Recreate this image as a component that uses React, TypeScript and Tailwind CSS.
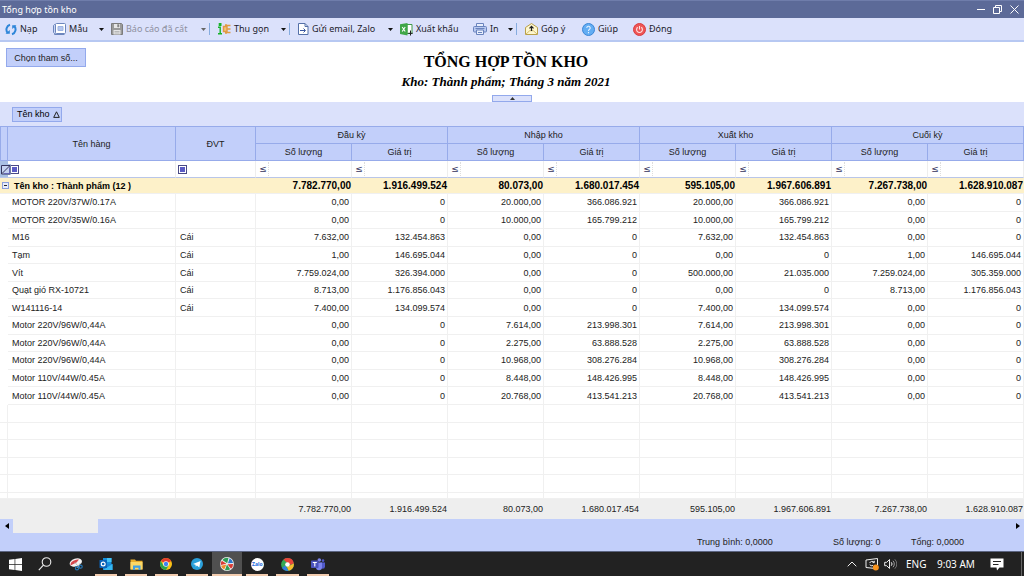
import type { ReactNode } from "react";
import clsx from "clsx";

const groups = ["Đầu kỳ", "Nhập kho", "Xuất kho", "Cuối kỳ"];

const totals = [
  "7.782.770,00", "1.916.499.524", "80.073,00", "1.680.017.454",
  "595.105,00", "1.967.606.891", "7.267.738,00", "1.628.910.087",
];

const items = [
  { name: "MOTOR 220V/37W/0.17A", unit: "", values: ["0,00", "0", "20.000,00", "366.086.921", "20.000,00", "366.086.921", "0,00", "0"] },
  { name: "MOTOR 220V/35W/0.16A", unit: "", values: ["0,00", "0", "10.000,00", "165.799.212", "10.000,00", "165.799.212", "0,00", "0"] },
  { name: "M16", unit: "Cái", values: ["7.632,00", "132.454.863", "0,00", "0", "7.632,00", "132.454.863", "0,00", "0"] },
  { name: "Tạm", unit: "Cái", values: ["1,00", "146.695.044", "0,00", "0", "0,00", "0", "1,00", "146.695.044"] },
  { name: "Vít", unit: "Cái", values: ["7.759.024,00", "326.394.000", "0,00", "0", "500.000,00", "21.035.000", "7.259.024,00", "305.359.000"] },
  { name: "Quạt gió RX-10721", unit: "Cái", values: ["8.713,00", "1.176.856.043", "0,00", "0", "0,00", "0", "8.713,00", "1.176.856.043"] },
  { name: "W141116-14", unit: "Cái", values: ["7.400,00", "134.099.574", "0,00", "0", "7.400,00", "134.099.574", "0,00", "0"] },
  { name: "Motor 220V/96W/0,44A", unit: "", values: ["0,00", "0", "7.614,00", "213.998.301", "7.614,00", "213.998.301", "0,00", "0"] },
  { name: "Motor 220V/96W/0,44A", unit: "", values: ["0,00", "0", "2.275,00", "63.888.528", "2.275,00", "63.888.528", "0,00", "0"] },
  { name: "Motor 220V/96W/0,44A", unit: "", values: ["0,00", "0", "10.968,00", "308.276.284", "10.968,00", "308.276.284", "0,00", "0"] },
  { name: "Motor 110V/44W/0.45A", unit: "", values: ["0,00", "0", "8.448,00", "148.426.995", "8.448,00", "148.426.995", "0,00", "0"] },
  { name: "Motor 110V/44W/0.45A", unit: "", values: ["0,00", "0", "20.768,00", "413.541.213", "20.768,00", "413.541.213", "0,00", "0"] },
];

const emptyRows = [1, 2, 3, 4, 5];

const headCell = "border-r border-b border-[#97abea] bg-[#c2cffa] p-0 text-center font-normal";
const lineCell = "border-r border-b border-[#f0f0f0] p-0";

export default function App() {
  return (
    <div className="flex h-screen min-h-[560px] flex-col overflow-hidden bg-white font-['Liberation_Sans',sans-serif] text-[9px] leading-4 text-[#222]">
      <TitleBar />
      <Toolbar />

      <section className="relative flex h-[60px] shrink-0 items-start px-1.5 pt-1.5">
        <button className="h-[19px] w-20 shrink-0 border border-[#93a9ec] bg-[#c2cffa]">Chọn tham số...</button>
        <div className="flex-1 pr-[92px] text-center font-['Liberation_Serif',serif] font-bold text-black">
          <h1 className="pt-1 text-[16px] leading-5">TỔNG HỢP TỒN KHO</h1>
          <p className="text-[13px] leading-5 italic">Kho: Thành phẩm; Tháng 3 năm 2021</p>
        </div>
        <button
          aria-label="Thu gọn tiêu đề"
          className="absolute bottom-0 left-1/2 flex h-[7px] w-10 -translate-x-1/2 items-center justify-center border border-[#93a9ec] bg-[#dbe1fb]"
        >
          <svg width="5" height="3" viewBox="0 0 5 3"><path d="M0 3 2.5 0 5 3z" fill="#333" /></svg>
        </button>
      </section>

      <div className="flex h-6 shrink-0 items-center bg-[#dbe1fb] px-3">
        <button className="flex h-[15px] items-center gap-[3px] border border-[#93a9ec] bg-[#c2cffa] pr-px pl-1 text-black">
          Tên kho
          <svg width="7" height="7" viewBox="0 0 7 7"><path d="M.7 6.4 3.5.8 6.3 6.4z" fill="none" stroke="#222" /></svg>
        </button>
      </div>

      <main className="min-h-0 flex-1">
        <StockTable />
      </main>

      <ScrollBar />

      <div className="flex h-[18px] shrink-0 items-center justify-end bg-[#c2cffa] pr-[60px]">
        <span className="w-[136px]">Trung bình: 0,0000</span>
        <span className="w-[78px]">Số lượng: 0</span>
        <span>Tổng: 0,0000</span>
      </div>

      <TaskBar />
    </div>
  );
}

function TitleBar() {
  return (
    <header className="flex h-[18px] shrink-0 items-center justify-between border-t border-[#6f7dab] bg-[#5c6a98] pl-0.5 font-['Noto_Sans',sans-serif] text-white">
      <span>Tổng hợp tồn kho</span>
      <div className="flex">
        <button aria-label="Thu nhỏ" className="flex w-4 justify-center">
          <svg width="9" height="9" viewBox="0 0 9 9"><path d="M0 4.5h8" stroke="#fff" /></svg>
        </button>
        <button aria-label="Khôi phục" className="flex w-4 justify-center">
          <svg width="9" height="9" viewBox="0 0 9 9" fill="none" stroke="#fff"><path d="M.5 2.5h6v6h-6zM2.5 2.5v-2h6v6h-2" /></svg>
        </button>
        <button aria-label="Đóng cửa sổ" className="flex w-[19px] justify-center">
          <svg width="9" height="9" viewBox="0 0 9 9"><path d="m.5.5 8 8m0-8-8 8" stroke="#fff" /></svg>
        </button>
      </div>
    </header>
  );
}

function Toolbar() {
  return (
    <nav className="flex h-6 shrink-0 items-center border-b-2 border-[#b7c8f2] bg-[#dbe1fb] pl-[5px] font-['Noto_Sans',sans-serif] text-[#1c1c2c]">
      <Tool label="Nạp" width="w-12"><ReloadIcon /></Tool>
      <Tool label="Mẫu" width="w-[45px]"><TemplateIcon /></Tool>
      <Arrow label="Chọn mẫu" />
      <Tool label="Báo cáo đã cất" width="w-[89px]" disabled><SaveIcon /></Tool>
      <Arrow label="Chọn báo cáo đã cất" disabled />
      <Divider />
      <Tool label="Thu gọn" width="w-[62px]"><CollapseIcon /></Tool>
      <Arrow label="Chọn thu gọn" />
      <Divider />
      <Tool label="Gửi email, Zalo" width="w-[89px]"><SendIcon /></Tool>
      <Arrow label="Chọn cách gửi" />
      <Tool label="Xuất khẩu" width="w-[73px]"><ExcelIcon /></Tool>
      <Tool label="In" width="w-[34px]"><PrintIcon /></Tool>
      <Arrow label="Chọn cách in" />
      <Divider />
      <Tool label="Góp ý" width="w-[57px]"><FeedbackIcon /></Tool>
      <Tool label="Giúp" width="w-[51px]"><HelpIcon /></Tool>
      <Tool label="Đóng" width="w-12"><PowerIcon /></Tool>
    </nav>
  );
}

function Tool({ label, width, disabled, children }: { label: string; width: string; disabled?: boolean; children: ReactNode }) {
  return (
    <button disabled={disabled} className={clsx("flex shrink-0 items-center gap-[3px] whitespace-nowrap", width, disabled && "text-[#8d8f9e]")}>
      {children}
      {label}
    </button>
  );
}

function Arrow({ label, disabled }: { label: string; disabled?: boolean }) {
  return (
    <button aria-label={label} disabled={disabled} className="flex w-[13px] shrink-0 pl-px">
      <svg width="5" height="3" viewBox="0 0 5 3"><path d="M0 0h5L2.5 3z" fill={disabled ? "#666" : "#111"} /></svg>
    </button>
  );
}

function Divider() {
  return <span className="-ml-1 mr-2 h-3 w-px shrink-0 bg-[#86acdf]" />;
}

function StockTable() {
  return (
    <table className="h-full w-full table-fixed border-separate border-spacing-0">
      <colgroup>
        <col className="w-2" />
        <col className="w-[168px]" />
        <col className="w-20" />
        {totals.map((_, i) => <col key={i} />)}
      </colgroup>
      <thead>
        <tr className="h-[18px]">
          <th rowSpan={2} className={clsx(headCell, "border-t border-l")} />
          <th rowSpan={2} className={clsx(headCell, "border-t")}>Tên hàng</th>
          <th rowSpan={2} className={clsx(headCell, "border-t")}>ĐVT</th>
          {groups.map((g) => (
            <th key={g} colSpan={2} className={clsx(headCell, "border-t")}>{g}</th>
          ))}
        </tr>
        <tr className="h-[17px]">
          {groups.map((g) => [
            <th key={g + "q"} className={headCell}>Số lượng</th>,
            <th key={g + "v"} className={headCell}>Giá trị</th>,
          ])}
        </tr>
        <tr className="h-[17px]">
          <td className="relative border-b border-[#b9c6e8] bg-[#a9c0e4] p-0">
            <svg className="absolute top-[3px] left-0" width="11" height="11" viewBox="0 0 11 11">
              <path d="M0 0h11v11H0z" fill="#a9c0e4" />
              <path d="M1.500 1.500h8.500v8.500H1.500zM2 9.500 10 1.500" fill="#c5d3f1" stroke="#36365e" />
              <path d="M4 9.500h5.500V4" fill="none" stroke="#6667b5" />
            </svg>
          </td>
          <FilterText label="Lọc tên hàng" />
          <FilterText label="Lọc ĐVT" />
          {totals.map((_, i) => (
            <td key={i} className="border-r border-b border-r-[#eee] border-b-[#b9c6e8] p-0">
              <div className="flex items-center">
                <button aria-label="Điều kiện lọc" className="w-3 shrink-0 pl-0.5 text-center font-['DejaVu_Sans',sans-serif] text-[#33335c]">≤</button>
                <input aria-label="Giá trị lọc" className="h-3.5 w-full min-w-0 border-l border-dotted border-[#ddd] outline-none" />
              </div>
            </td>
          ))}
        </tr>
      </thead>
      <tbody>
        <tr className="h-4 bg-[#fdf1c9] text-[10px] font-bold text-black">
          <td colSpan={3} className="border-b border-[#f0f0f0] p-0">
            <div className="flex items-center gap-[5px] pl-0.5 text-[9px] leading-[14px]">
              <button aria-label="Thu gọn nhóm" className="flex size-[7px] items-center justify-center border border-[#8ba0dd] bg-[#e8edfc]">
                <span className="h-px w-[3px] bg-[#222]" />
              </button>
              Tên kho : Thành phẩm (12 )
            </div>
          </td>
          {totals.map((t, i) => (
            <td key={i} className="border-b border-[#f0f0f0] p-0 pr-px text-right leading-[14px]">{t}</td>
          ))}
        </tr>
        {items.map((item, i) => (
          <tr key={i}>
            <td className="p-0" />
            <td className={clsx(lineCell, "pl-1")}>{item.name}</td>
            <td className={clsx(lineCell, "pl-1")}>{item.unit}</td>
            {item.values.map((v, n) => (
              <td key={n} className={clsx(lineCell, "pr-0.5 text-right")}>{v}</td>
            ))}
          </tr>
        ))}
        {emptyRows.map((n) => (
          <tr key={n}>
            <td className={lineCell}>&nbsp;</td>
            <td className={lineCell} />
            <td className={lineCell} />
            {totals.map((_, i) => <td key={i} className={lineCell} />)}
          </tr>
        ))}
        <tr className="h-1.5">
          <td className={lineCell} />
          <td className={lineCell} />
          <td className={lineCell} />
          {totals.map((_, i) => <td key={i} className={lineCell} />)}
        </tr>
      </tbody>
      <tfoot>
        <tr className="h-5 bg-[#eee]">
          <td colSpan={3} className="p-0" />
          {totals.map((t, i) => (
            <td key={i} className="p-0 pr-px text-right">{t}</td>
          ))}
        </tr>
      </tfoot>
    </table>
  );
}

function FilterText({ label }: { label: string }) {
  return (
    <td className="border-r border-b border-r-[#eee] border-b-[#b9c6e8] p-0">
      <div className="flex items-center gap-0.5 pl-0.5">
        <button aria-label="Điều kiện lọc" className="flex size-[9px] shrink-0 items-center justify-center border border-[#4a4a86] bg-white">
          <span className="size-[5px] bg-[#5b5bc4]" />
        </button>
        <input aria-label={label} className="h-3.5 w-full min-w-0 outline-none" />
      </div>
    </td>
  );
}

function ScrollBar() {
  return (
    <div className="flex h-3.5 shrink-0 items-center justify-between bg-[#c2cffa]">
      <div className="flex h-full items-center">
        <button aria-label="Cuộn trái" className="flex w-[13px] justify-center">
          <svg width="4" height="6" viewBox="0 0 4 6"><path d="M4 0v6L0 3z" fill="#000" /></svg>
        </button>
        <div className="h-full w-[85px] bg-[#eee]" />
      </div>
      <button aria-label="Cuộn phải" className="flex w-[13px] justify-center">
        <svg width="4" height="6" viewBox="0 0 4 6"><path d="M0 0v6l4-3z" fill="#000" /></svg>
      </button>
    </div>
  );
}

function TaskBar() {
  return (
    <footer className="flex h-[25px] shrink-0 items-stretch justify-between border-t border-[#5b6480] bg-[#222] font-['Noto_Sans',sans-serif] text-white">
      <div className="grid w-[333px] grid-cols-11">
        <TaskButton label="Bắt đầu">
          <svg width="13" height="13" viewBox="0 0 13 13" fill="#fff"><path d="M0 1.800 5.600 1v5.100H0zM6.300.9 13 0v6.100H6.300zM0 6.800h5.600V12L0 11.200zM6.300 6.800H13V13l-6.700-.9z" /></svg>
        </TaskButton>
        <TaskButton label="Tìm kiếm">
          <svg width="14" height="14" viewBox="0 0 14 14" fill="none" stroke="#eee" strokeWidth="1.100"><circle cx="8.500" cy="5" r="4.300" /><path d="M5.400 8.200.8 13.200" /></svg>
        </TaskButton>
        <TaskButton label="Công cụ cắt">
          <svg width="14" height="14" viewBox="0 0 14 14">
            <ellipse cx="6.800" cy="5.500" rx="6.300" ry="4" transform="rotate(-18 6.800 5.500)" fill="#f3f3f3" />
            <path d="M1.500 8.500C1 5 5 2.500 10 2.500L7.500 5.500z" fill="#d6454b" />
            <path d="m6 5.500 5 6M11.500 6 8 11" stroke="#bbb" />
            <circle cx="8" cy="11.300" r="1.600" fill="none" stroke="#2476b5" strokeWidth="1.200" />
            <circle cx="11.700" cy="9.700" r="1.500" fill="none" stroke="#2476b5" strokeWidth="1.200" />
          </svg>
        </TaskButton>
        <TaskButton label="Outlook" open>
          <svg width="14" height="14" viewBox="0 0 14 14">
            <path d="M4 1h8.500v8H4z" fill="#1590dd" />
            <path d="M8 1h4.500v4H8z" fill="#45c3f5" />
            <path d="M4 7h9.500v6H4z" fill="#1a84d4" />
            <path d="m4 13 9.500-6v6z" fill="#35b8f1" />
            <rect x=".5" y="3" width="7.500" height="8" rx=".6" fill="#0a63b8" />
            <circle cx="4.200" cy="7" r="1.900" fill="none" stroke="#fff" strokeWidth="1.200" />
          </svg>
        </TaskButton>
        <TaskButton label="Thư mục" open>
          <svg width="13" height="13" viewBox="0 0 13 13">
            <path d="M.5 1.500h4.500l1 1.300h6.500v8.700H.5z" fill="#e9ae2c" />
            <path d="M.5 4h12v7.500H.5z" fill="#fcd866" />
            <path d="M3 7.500h7.500V12H8.500V9.700H5V12H3z" fill="#3fa0e4" />
          </svg>
        </TaskButton>
        <TaskButton label="Chrome" open><ChromeIcon /></TaskButton>
        <TaskButton label="Telegram" open>
          <svg width="12" height="12" viewBox="0 0 12 12"><circle cx="6" cy="6" r="6" fill="#2a9fd9" /><path d="m2 5.900 7.500-3-1.200 6.500-2.400-1.800-1.100 1.100-.3-2z" fill="#fff" /></svg>
        </TaskButton>
        <TaskButton label="Kế toán" open active>
          <svg width="14" height="14" viewBox="0 0 14 14">
            <circle cx="7" cy="7" r="6.900" fill="#f3f3f3" />
            <path d="M7.200 6.200 2.300 3A6.200 6.200 0 0 1 8.500.9z" fill="#2f9e57" />
            <path d="M8 6.300 9.600 1.300A6.200 6.200 0 0 1 13.100 6z" fill="#2b79cc" />
            <path d="M7.500 7.200 13.100 7A6.200 6.200 0 0 1 11 11.700z" fill="#d93a34" />
            <path d="M7 7.600 10.200 12.300A6.200 6.200 0 0 1 5 12.900z" fill="#2f9e57" />
            <path d="M6.400 7.500 4.200 12.500A6.200 6.200 0 0 1 1 8.800z" fill="#ef8c2c" />
            <path d="M6.400 6.700 .9 7.900A6.200 6.200 0 0 1 1.800 3.700z" fill="#d93a34" />
          </svg>
        </TaskButton>
        <TaskButton label="Zalo" open>
          <span className="flex h-[13px] w-[13px] items-center justify-center rounded-full bg-white text-[5px] font-bold text-[#1668dc]">Zalo</span>
        </TaskButton>
        <TaskButton label="Trình duyệt" open>
          <svg width="13" height="13" viewBox="0 0 13 13">
            <circle cx="6.500" cy="6.500" r="6.400" fill="#35a853" />
            <path d="M6.500.1a6.400 6.400 0 0 1 6.300 5.400L9 7 4 3 2.500 1.500A6.400 6.400 0 0 1 6.500.1z" fill="#e8453c" />
            <path d="M12.800 5.500a6.400 6.400 0 0 1-5.300 7.300L6 9l4-2z" fill="#f9bb2d" />
            <path d="M7.500 12.800A6.400 6.400 0 0 1 1 9.900L4 7.500z" fill="#2f7de1" />
            <circle cx="6.500" cy="6.500" r="2.300" fill="#fff" />
          </svg>
        </TaskButton>
        <TaskButton label="Teams" open>
          <svg width="14" height="13" viewBox="0 0 14 13">
            <circle cx="8.300" cy="2" r="1.800" fill="#7b83eb" />
            <circle cx="12" cy="2.600" r="1.300" fill="#5059c9" />
            <path d="M9.500 4.500H14v4a2.200 2.200 0 0 1-4.500 0z" fill="#5059c9" />
            <path d="M5 4.500h6v4.800a3 3 0 0 1-6 0z" fill="#7b83eb" />
            <rect y="2.500" width="7.500" height="7.500" rx=".7" fill="#4b53bc" />
            <path d="M1.800 4.500h4M3.800 4.500v4" stroke="#fff" strokeWidth="1.100" />
          </svg>
        </TaskButton>
      </div>

      <div className="flex items-center text-[10px]">
        <button aria-label="Biểu tượng ẩn" className="flex w-[18px]">
          <svg width="10" height="6" viewBox="0 0 10 6"><path d="m.7 5.300 4.300-4.300 4.300 4.300" fill="none" stroke="#eee" /></svg>
        </button>
        <button aria-label="Cập nhật" className="flex w-[19px]">
          <svg width="14" height="14" viewBox="0 0 14 14" fill="none" stroke="#eee">
            <path d="M10.500 11.500 1 10.500V3l11.500-1.500V8" />
            <path d="M9 5.300A2.500 2.500 0 0 0 4.700 6M4.700 7.500A2.500 2.500 0 0 0 8 8.500M9.300 3.800v1.800H7.500" />
            <circle cx="10.800" cy="10.500" r="3" fill="#f7931e" stroke="none" />
          </svg>
        </button>
        <button aria-label="Âm lượng" className="flex w-[22px]">
          <svg width="13" height="12" viewBox="0 0 13 12" fill="none" stroke="#eee">
            <path d="M.7 4.300h2L5.500 1.500v9L2.700 7.700h-2z" />
            <path d="M7.300 4.300a2.500 2.500 0 0 1 0 3.400" /><path d="M9 2.800a4.600 4.600 0 0 1 0 6.400" opacity=".6" /><path d="M10.800 1.300a6.600 6.600 0 0 1 0 9.400" opacity=".4" />
          </svg>
        </button>
        <span className="w-[31px]">ENG</span>
        <span className="w-[53px]">9:03 AM</span>
        <button aria-label="Thông báo" className="flex w-[31px]">
          <svg width="14" height="13" viewBox="0 0 14 13"><path d="M.5.5h13v9H9.500L7 12.500 6.500 9.500h-6z" fill="#fff" /><path d="M3 3.500h8M3 6.500h5.500" stroke="#222" /></svg>
        </button>
        <span className="mr-0.5 h-full w-px bg-[#666]" />
      </div>
    </footer>
  );
}

function TaskButton({ label, open, active, children }: { label: string; open?: boolean; active?: boolean; children: ReactNode }) {
  return (
    <button aria-label={label} className={clsx("relative flex items-center justify-center", active && "bg-[#505050]")}>
      {children}
      {open && <span className={clsx("absolute bottom-0 h-0.5 bg-[#f3cdb0]", active ? "inset-x-0" : "inset-x-1")} />}
    </button>
  );
}

function ChromeIcon() {
  return (
    <svg width="12" height="12" viewBox="0 0 12 12">
      <circle cx="6" cy="6" r="6" fill="#fbc116" />
      <path d="M6 6 .8 3A6 6 0 0 1 11.200 3z" fill="#e33b2e" />
      <path d="M.8 3A6 6 0 0 0 6 12l2.600-4.500L3.400 7.500z" fill="#2ba24c" />
      <circle cx="6" cy="6" r="2.800" fill="#fff" />
      <circle cx="6" cy="6" r="2.200" fill="#3f83f1" />
    </svg>
  );
}

function ReloadIcon() {
  return (
    <svg width="12" height="13" viewBox="0 0 12 13" fill="none" stroke="#2e86d9" strokeWidth="2">
      <path d="M5 1.800A5 5 0 0 0 2.800 10" /><path d="M7 11.200A5 5 0 0 0 9.200 3" />
      <path d="M.5 10.800h4.300V7zM11.500 2.200H7.200V6z" fill="#2e86d9" stroke="none" />
    </svg>
  );
}

function TemplateIcon() {
  return (
    <svg width="13" height="12" viewBox="0 0 13 12" fill="none" stroke="#6c86bd">
      <path d="M2.500 10.500h-1l-1-1v-7l1-1h1" fill="#c9d6f5" /><rect x="2.500" y=".5" width="10" height="10" rx="1" fill="#fff" />
      <path d="M5 3.500h5v4H5z" fill="#b4c6ee" stroke="#9cb3e2" /><path d="M1.500 10.500v1h10" />
    </svg>
  );
}

function SaveIcon() {
  return (
    <svg width="12" height="12" viewBox="0 0 12 12">
      <path d="M.5.5h10l1 1v10H.5z" fill="#9a9a9a" stroke="#7c7c7c" />
      <path d="M3 1h6v4H3zM2.500 7h7v4.500h-7z" fill="#e6e6e6" /><path d="M6.500 1.500h1.500v2.500H6.500zM3.500 8.500h5M3.500 10h5" fill="#777" stroke="#999" strokeWidth=".6" />
    </svg>
  );
}

function CollapseIcon() {
  return (
    <svg width="13" height="12" viewBox="0 0 13 12">
      <path d="M0 4.200h2.200v6.600M0 10.800h4M1.400.8h1.400v1.400H1.400z" fill="none" stroke="#16b32a" strokeWidth="1.400" />
      <path d="M5.500 3.500H9v5H5.500zM9 2.500h3.500M9 6h3.500M9 9.500h3.500M7 2h2M7 10h2" fill="#f3c27a" stroke="#e09a42" strokeWidth="1.400" />
    </svg>
  );
}

function SendIcon() {
  return (
    <svg width="11" height="12" viewBox="0 0 11 12">
      <path d="M.5.5h6.500l3 3v8H.5z" fill="#fff" stroke="#5570a8" /><path d="M7 .5v3h3" fill="none" stroke="#5570a8" />
      <path d="M2 7.500h5M5.500 5.500l2 2-2 2" fill="none" stroke="#3b57a0" />
    </svg>
  );
}

function ExcelIcon() {
  return (
    <svg width="13" height="13" viewBox="0 0 13 13">
      <path d="M7 1.500h5v9H7z" fill="#fff" stroke="#3f9a49" /><path d="M0 1.300 7.500 0v12.500L0 11z" fill="#3fa648" />
      <path d="m2.200 4 3 4.500m0-4.500-3 4.500" stroke="#fff" strokeWidth="1.100" /><path d="M10.500 7.500v5M8.300 10.300h4.400" stroke="#222" />
    </svg>
  );
}

function PrintIcon() {
  return (
    <svg width="14" height="12" viewBox="0 0 14 12" fill="#e9effd" stroke="#6a83bd">
      <path d="M3.500 3.500v-3h7v3" /><rect x=".5" y="3.500" width="13" height="5.500" rx="1" fill="#b9c9f0" />
      <path d="M3.500 7h7v4.500h-7zM5 9.500h4" /><path d="M2.500 5.500h9" />
    </svg>
  );
}

function FeedbackIcon() {
  return (
    <svg width="13" height="12" viewBox="0 0 13 12">
      <path d="M.5 4.500 6.500.5l6 4v7H.5z" fill="#fdf6cf" stroke="#b9a04a" /><path d="m.8 11.200 4-3.500h3.500l4 3.500" fill="none" stroke="#d4bd68" />
      <path d="M6.500 8V3.500M4.500 5.300l2-2 2 2" fill="none" stroke="#222" strokeWidth="1.200" />
    </svg>
  );
}

function HelpIcon() {
  return (
    <svg width="13" height="13" viewBox="0 0 13 13">
      <circle cx="6.500" cy="6.500" r="6" fill="#63adf3" stroke="#3a86d6" />
      <path d="M4.800 5a1.700 1.700 0 1 1 2.500 1.500q-.8.400-.8 1.400M6.500 9v1.200" fill="none" stroke="#e8f3ff" strokeWidth="1.100" />
    </svg>
  );
}

function PowerIcon() {
  return (
    <svg width="13" height="13" viewBox="0 0 13 13">
      <circle cx="6.500" cy="6.500" r="6" fill="#ee5555" stroke="#d93b3f" />
      <path d="M4.700 4.300a2.900 2.900 0 1 0 3.600 0M6.500 3v3.500" fill="none" stroke="#ffe3e3" strokeWidth="1.100" />
    </svg>
  );
}
